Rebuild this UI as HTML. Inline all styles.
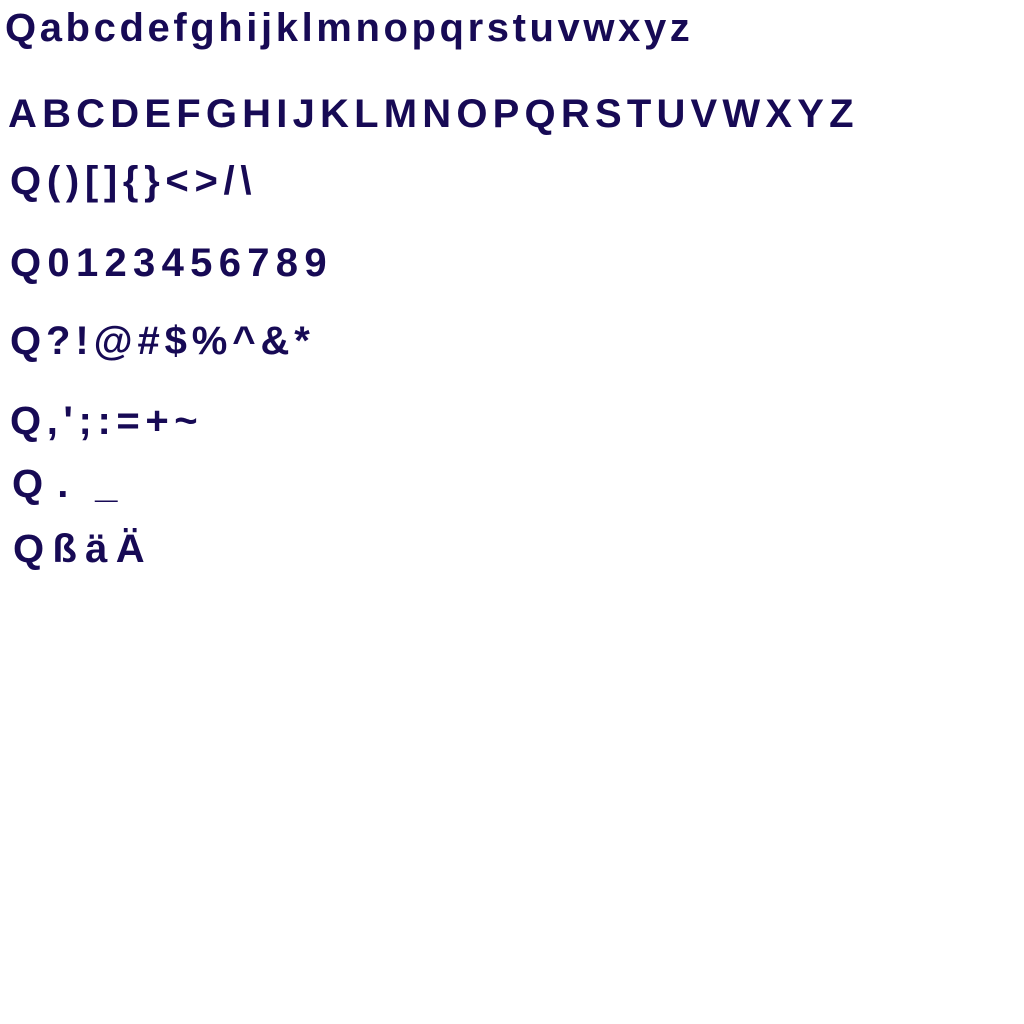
<!DOCTYPE html>
<html><head><meta charset="utf-8"><style>
html,body{margin:0;padding:0;background:#fff;width:1024px;height:1024px;overflow:hidden}
div{position:absolute;font-family:"Liberation Sans",sans-serif;font-weight:bold;color:#170a55;font-size:40px;line-height:40px;white-space:pre}
</style></head><body>
<div style="left:5px;top:8px;letter-spacing:3.6px">Qabcdefghijklmnopqrstuvwxyz</div>
<div style="left:8px;top:94px;letter-spacing:5.2px">ABCDEFGHIJKLMNOPQRSTUVWXYZ</div>
<div style="left:10px;top:161px;letter-spacing:5.7px">Q()[]{}&lt;&gt;/\</div>
<div style="left:10px;top:243px;letter-spacing:6.3px">Q0123456789</div>
<div style="left:10px;top:321px;letter-spacing:4.9px">Q?!@#$%^&amp;*</div>
<div style="left:10px;top:401px;letter-spacing:5.6px">Q,';:=+~</div>
<div style="left:12px;top:464px;letter-spacing:1.5px">Q .  _</div>
<div style="left:13px;top:529px;letter-spacing:8.3px">QßäÄ</div>
</body></html>
